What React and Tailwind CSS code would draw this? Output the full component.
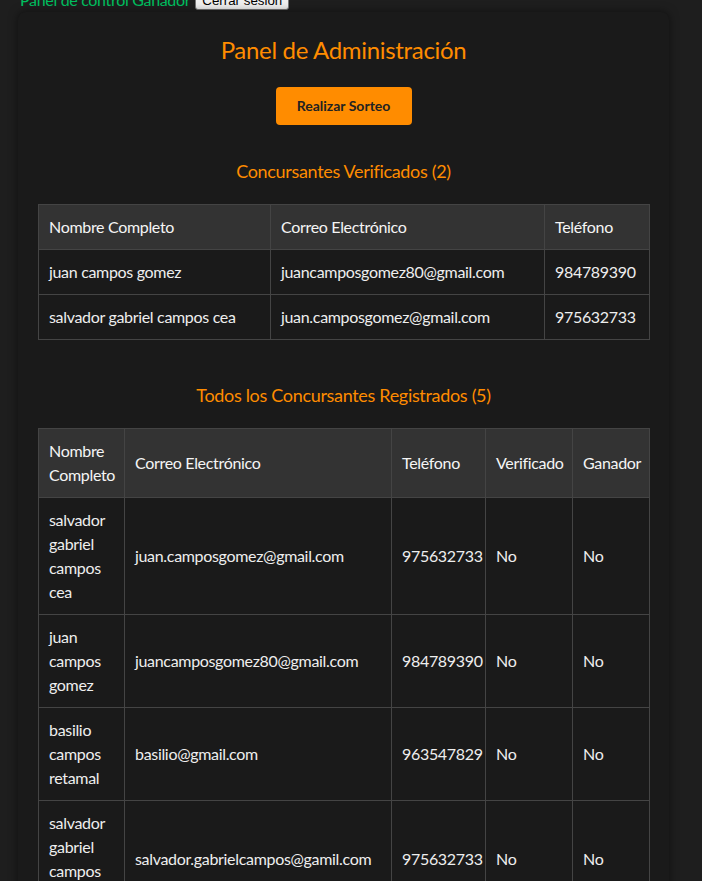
import React from "react";

const verified = [
  ["juan campos gomez", "juancamposgomez80@gmail.com", "984789390"],
  ["salvador gabriel campos cea", "juan.camposgomez@gmail.com", "975632733"],
];

const all = [
  ["salvador gabriel campos cea", "juan.camposgomez@gmail.com", "975632733", "No", "No"],
  ["juan campos gomez", "juancamposgomez80@gmail.com", "984789390", "No", "No"],
  ["basilio campos retamal", "basilio@gmail.com", "963547829", "No", "No"],
  ["salvador gabriel campos cea", "salvador.gabrielcampos@gamil.com", "975632733", "No", "No"],
  ["maria lopez soto", "maria.lopez@gmail.com", "912345678", "No", "No"],
];

const th = "border border-[#444] bg-[#333] px-[10px] py-[10px] text-left font-normal text-[#f5f5f5] align-middle";
const td = "border border-[#444] px-[10px] py-[10px] text-left text-[#eeeeee] align-middle";

export default function App() {
  return (
    <div
      className="min-h-screen bg-[#1e1e1e] flex flex-col text-[16px] leading-[24px] tracking-[-0.02em]"
      style={{ fontFamily: "Lato, 'Noto Sans', sans-serif" }}
    >
      <div className="-mt-[12px] pl-[20px] flex items-center h-[24px]">
        <span className="text-[#00c060]">Panel de control Ganador</span>
        <button
          className="ml-[5px] bg-[#efefef] border border-[#767676] rounded-[3px] px-[6px] text-[13.33px] leading-[17px] text-black tracking-normal"
          style={{ fontFamily: "'Liberation Sans', Arial, sans-serif" }}
        >
          Cerrar sesión
        </button>
      </div>
      <div className="ml-[18px] w-[651px] bg-[#1a1a1a] rounded-[8px] shadow-[0_0_10px_rgba(0,0,0,0.5)] px-[20px] pt-[23px] pb-[20px]">
        <h1 className="text-center text-[24px] leading-[30px] text-[#ff8c00] font-normal">
          Panel de Administración
        </h1>
        <div className="flex justify-center mt-[22px]">
          <button className="w-[136px] h-[38px] bg-[#ff8c00] rounded-[4px] text-[14px] font-bold text-[#222] tracking-normal">
            Realizar Sorteo
          </button>
        </div>
        <h2 className="text-center text-[18px] leading-[24px] text-[#ff8c00] font-normal mt-[34px]">
          Concursantes Verificados (2)
        </h2>
        <table className="w-full border-collapse mt-[21px] table-fixed">
          <colgroup>
            <col className="w-[232px]" />
            <col className="w-[274px]" />
            <col className="w-[105px]" />
          </colgroup>
          <thead>
            <tr>
              <th className={th}>Nombre Completo</th>
              <th className={th}>Correo Electrónico</th>
              <th className={th}>Teléfono</th>
            </tr>
          </thead>
          <tbody>
            {verified.map((r, i) => (
              <tr key={i}>
                {r.map((c, j) => (
                  <td key={j} className={td}>{c}</td>
                ))}
              </tr>
            ))}
          </tbody>
        </table>
        <h2 className="text-center text-[18px] leading-[24px] text-[#ff8c00] font-normal mt-[43px]">
          Todos los Concursantes Registrados (5)
        </h2>
        <table className="w-full border-collapse mt-[21px] table-fixed">
          <colgroup>
            <col className="w-[86px]" />
            <col className="w-[267px]" />
            <col className="w-[94px]" />
            <col className="w-[87px]" />
            <col className="w-[77px]" />
          </colgroup>
          <thead>
            <tr>
              <th className={th}>Nombre Completo</th>
              <th className={th}>Correo Electrónico</th>
              <th className={th}>Teléfono</th>
              <th className={th}>Verificado</th>
              <th className={th}>Ganador</th>
            </tr>
          </thead>
          <tbody>
            {all.map((r, i) => (
              <tr key={i}>
                {r.map((c, j) => (
                  <td key={j} className={td}>{c}</td>
                ))}
              </tr>
            ))}
          </tbody>
        </table>
      </div>
    </div>
  );
}
